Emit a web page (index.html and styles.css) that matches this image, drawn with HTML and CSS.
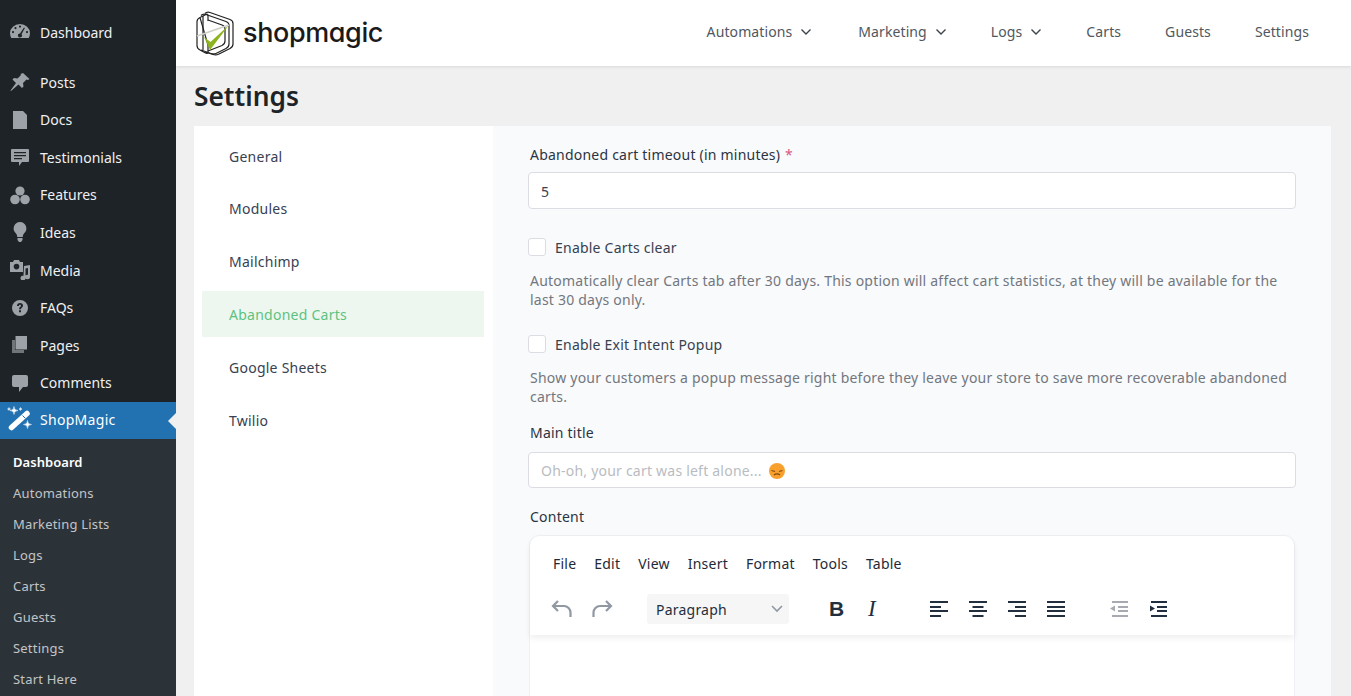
FILE: index.html
```html
<!DOCTYPE html>
<html lang="en">
<head>
<meta charset="utf-8">
<title>Settings</title>
<link rel="stylesheet" href="styles.css">
</head>
<body>
<div class="app">
  <aside class="side">
    <nav class="menu">
      <a class="item first"><svg class="ico" viewBox="0 0 20 20"><path fill-rule="evenodd" d="M10 2a10 9 0 0 0-10 9c0 1.800.4 3.300 1.200 5h17.600c.8-1.700 1.200-3.200 1.200-5a10 9 0 0 0-10-9zM10 3.500a1.100 1.100 0 1 1 0 2.200 1.100 1.100 0 0 1 0-2.200zM5.500 5a1.100 1.100 0 1 1 0 2.200 1.100 1.100 0 0 1 0-2.200zM3 9a1.100 1.100 0 1 1 0 2.200A1.100 1.100 0 0 1 3 9zm14 0a1.100 1.100 0 1 1 0 2.200 1.100 1.100 0 0 1 0-2.200zm-3-3.500.9.6-3.400 6.200a2 2 0 1 1-1.500-.8z"/></svg><span>Dashboard</span></a>
      <a class="item sep"><svg class="ico" viewBox="0 0 20 20"><path d="M13 1l6.500 6-1.500 1-1.500-.5-3.500 3.500.5 3.500-1.500 1.500-3.500-3.500L1 19l-.5-.5 5.500-7.500L2.500 7.500 4 6l3.500.5L11 3l-.5-1z"/></svg><span>Posts</span></a>
      <a class="item"><svg class="ico" viewBox="0 0 20 20"><path d="M3 1h10l4 4v14H3z"/></svg><span>Docs</span></a>
      <a class="item"><svg class="ico" viewBox="0 0 20 20"><path fill-rule="evenodd" d="M2 2h16a1 1 0 0 1 1 1v11a1 1 0 0 1-1 1h-6l-3 4v-4H2a1 1 0 0 1-1-1V3a1 1 0 0 1 1-1zm2 3v1.300h12V5zm0 3v1.300h12V8zm0 3v1.300h8V11z"/></svg><span>Testimonials</span></a>
      <a class="item"><svg class="ico" viewBox="0 0 20 20"><circle cx="10" cy="6" r="4.600"/><circle cx="5" cy="14.500" r="4.800"/><circle cx="15" cy="14.500" r="4.800"/></svg><span>Features</span></a>
      <a class="item"><svg class="ico" viewBox="0 0 20 20"><path d="M10 0a6.500 6.500 0 0 1 4 11.500c-.8.8-1.200 2-1.200 3.500H7.200c0-1.500-.4-2.700-1.200-3.500A6.500 6.500 0 0 1 10 0zM7.500 16h5v2l-1.500 2H9l-1.500-2z"/></svg><span>Ideas</span></a>
      <a class="item"><svg class="ico" viewBox="0 0 20 20"><path fill-rule="evenodd" d="M0 2h3l1-2h5l1 2h3v10H0zm6.500 1.800a2.800 2.800 0 1 0 0 5.600 2.800 2.800 0 0 0 0-5.600z"/><path d="M14 6l6-1v12a2.500 2.300 0 1 1-2-2.200V8l-2.500.5V18a2.500 2.300 0 1 1-2-2.200z"/></svg><span>Media</span></a>
      <a class="item"><svg class="ico" viewBox="0 0 20 20"><path fill-rule="evenodd" d="M10 2a8 8 0 1 1 0 16 8 8 0 0 1 0-16zM7 8h2c0-.8.400-1.200 1-1.200s1 .4 1 1c0 1-2 1.300-2 3.400h2c0-1.400 2-1.700 2-3.600C13 6 11.800 5 10 5 8.200 5 7 6.200 7 8zm2 4.300v2h2v-2z"/></svg><span>FAQs</span></a>
      <a class="item"><svg class="ico" viewBox="0 0 20 20"><path opacity=".65" d="M2 5h3v10h9v3H2z"/><path d="M5.500 1H17v13.500H5.500z"/></svg><span>Pages</span></a>
      <a class="item"><svg class="ico" viewBox="0 0 20 20"><path d="M4 2h12a2 2 0 0 1 2 2v8a2 2 0 0 1-2 2h-3l-4 5v-5H4a2 2 0 0 1-2-2V4a2 2 0 0 1 2-2z"/></svg><span>Comments</span></a>
      <a class="item current"><svg class="ico" viewBox="0 0 24 24"><path class="wand" d="M3.500 19.500L19 5.500"/><path class="wandcut" d="M14.500 7.500l2.800 2.800"/><path class="spark" d="M6 -1.500Q6 2.500 10 2.500Q6 2.500 6 6.500Q6 2.500 2 2.500Q6 2.500 6 -1.500zM19.500 12.500Q19.500 16.500 23.500 16.500Q19.500 16.500 19.500 20.500Q19.500 16.500 15.500 16.500Q19.500 16.500 19.500 12.500zM1 -.5Q1 1 2.500 1Q1 1 1 2.500Q1 1 -.5 1Q1 1 1 -.5zM12.500 -.5Q12.500 1 14 1Q12.500 1 12.500 2.500Q12.500 1 11 1Q12.500 1 12.500 -.5z"/></svg><span>ShopMagic</span><i class="notch"></i></a>
    </nav>
    <nav class="sub">
      <a class="subitem bold">Dashboard</a>
      <a class="subitem">Automations</a>
      <a class="subitem">Marketing Lists</a>
      <a class="subitem">Logs</a>
      <a class="subitem">Carts</a>
      <a class="subitem">Guests</a>
      <a class="subitem">Settings</a>
      <a class="subitem">Start Here</a>
    </nav>
  </aside>
  <div class="main">
    <header class="top">
      <div class="brand">
        <svg class="logo" viewBox="0 0 46 52" fill="none">
          <path class="lg" d="M13 6.500Q15 4.500 18 5.500L38 12.500Q41 13.500 41 16.500V37Q41 40 38 41.500L27 47Q24 48.500 21 47.500L13 45"/>
          <path class="lg" d="M9 8.500Q11 6.500 14 7.500L34 14.500Q37 15.500 37 18.500V37Q37 40 34 41.500L25 46Q22 47.500 19 46.500L9 43"/>
          <path class="lg" d="M8 10.500L14 7.500Q16 6.500 16 9V14M16 38V44.500Q16 47 13.500 46L8 43Q5 41.500 5 38.500V14.500Q5 12 8 10.500z"/>
          <path class="lg" d="M11 9V43"/>
          <path class="lg" d="M16 13L30 18Q33 19 33 22V34Q33 37 30 38.500L16 44"/>
          <path class="ck" d="M12 30L18.500 35 37 18 18 43z"/>
          <path class="gr" d="M5 29L37 18" />
        </svg>
        <span class="word">shopmagic</span>
      </div>
      <nav class="links">
        <a class="link first-link">Automations<svg class="chev" viewBox="0 0 12 8"><path d="M1.500 1.500L6 6l4.500-4.500"/></svg></a>
        <a class="link">Marketing<svg class="chev" viewBox="0 0 12 8"><path d="M1.500 1.500L6 6l4.500-4.500"/></svg></a>
        <a class="link">Logs<svg class="chev" viewBox="0 0 12 8"><path d="M1.500 1.500L6 6l4.500-4.500"/></svg></a>
        <a class="link">Carts</a>
        <a class="link">Guests</a>
        <a class="link">Settings</a>
      </nav>
    </header>
    <div class="content">
      <h1 class="title">Settings</h1>
      <div class="card">
        <ul class="tabs">
          <li class="tab">General</li>
          <li class="tab">Modules</li>
          <li class="tab">Mailchimp</li>
          <li class="tab active">Abandoned Carts</li>
          <li class="tab">Google Sheets</li>
          <li class="tab">Twilio</li>
        </ul>
        <form class="form">
          <div class="label l1">Abandoned cart timeout (in minutes) <b class="req">*</b></div>
          <div class="input value">5</div>
          <div class="check c1"><i class="box"></i><span>Enable Carts clear</span></div>
          <p class="help h1x">Automatically clear Carts tab after 30 days. This option will affect cart statistics, at they will be available for the last 30 days only.</p>
          <div class="check c2"><i class="box"></i><span>Enable Exit Intent Popup</span></div>
          <p class="help h2x">Show your customers a popup message right before they leave your store to save more recoverable abandoned carts.</p>
          <div class="label l2">Main title</div>
          <div class="input ph">Oh-oh, your cart was left alone...
            <svg class="emoji" viewBox="0 0 16 16"><circle cx="8" cy="8" r="8" fill="#f9a02c"/><path d="M2.500 7.500L6 8.500M13.500 7.500L10 8.500M5 12c1.500-1.500 4.500-1.500 6 0" stroke="#7c4a12" stroke-width="1.100" fill="none"/></svg>
          </div>
          <div class="label l3">Content</div>
          <div class="editor">
            <div class="ehead">
              <div class="emenu"><span>File</span><span>Edit</span><span>View</span><span>Insert</span><span>Format</span><span>Tools</span><span>Table</span></div>
              <div class="etools">
                <svg class="tool" viewBox="0 0 24 24"><path class="st dim" d="M8 4L3 9l5 5M3.500 9H14a6.500 6.500 0 0 1 6.500 6.500V20"/></svg>
                <svg class="tool t2" viewBox="0 0 24 24"><path class="st dim" d="M16 4l5 5-5 5M20.500 9H10a6.500 6.500 0 0 0-6.500 6.500V20"/></svg>
                <div class="select"><span>Paragraph</span><svg class="selchev" viewBox="0 0 12 8"><path d="M1 1l5 5 5-5"/></svg></div>
                <b class="tool-b">B</b>
                <i class="tool-i">I</i>
                <svg class="tool t3" viewBox="0 0 24 24"><path class="fl" d="M3 4h18v2H3zM3 9h11v2H3zM3 13h18v2H3zM3 18h11v2H3z"/></svg>
                <svg class="tool t4" viewBox="0 0 24 24"><path class="fl" d="M3 4h18v2H3zM6.500 9h11v2h-11zM3 13h18v2H3zM6.500 18h11v2h-11z"/></svg>
                <svg class="tool t4" viewBox="0 0 24 24"><path class="fl" d="M3 4h18v2H3zM10 9h11v2H10zM3 13h18v2H3zM10 18h11v2H10z"/></svg>
                <svg class="tool t4" viewBox="0 0 24 24"><path class="fl" d="M3 4h18v2H3zM3 9h18v2H3zM3 13h18v2H3zM3 18h18v2H3z"/></svg>
                <svg class="tool t5" viewBox="0 0 24 24"><path class="fl dimf" d="M5 4h16v2H5zM11 9h10v2H11zM11 13h10v2H11zM5 18h16v2H5zM8 8.500v6L3 11.500z"/></svg>
                <svg class="tool t4" viewBox="0 0 24 24"><path class="fl" d="M5 4h16v2H5zM11 9h10v2H11zM11 13h10v2H11zM5 18h16v2H5zM4 8.500v6l5-3z"/></svg>
              </div>
            </div>
          </div>
        </form>
      </div>
    </div>
  </div>
</div>
</body>
</html>
```
FILE: styles.css
```css
* { box-sizing: border-box; }
html, body { margin: 0; height: 696px; overflow: hidden; }
body { font-family: "Noto Sans", "Open Sans", sans-serif; font-size: 14px; color: #2c3338; background: #f0f0f0; }
.app { display: flex; height: 696px; }

.side { width: 176px; flex: none; background: #1d2327; display: flex; flex-direction: column; }
.menu { padding-top: 13.300px; }
.item { display: flex; align-items: center; height: 37.600px; padding-left: 10px; color: #f0f0f1; font-size: 14px; position: relative; }
.item.sep { margin-top: 12.400px; }
.item .ico { width: 20px; height: 20px; fill: #9ca2a7; margin-right: 10px; flex: none; }
.item.current { background: #2271b1; color: #fff; letter-spacing: .3px; padding-bottom: 1px; }
.item.current .ico { width: 24px; height: 24px; margin-left: -2px; margin-right: 8px; overflow: visible; }
.wand { fill: none; stroke: #fff; stroke-width: 5.500; stroke-linecap: round; }
.wandcut { fill: none; stroke: #2271b1; stroke-width: 1; }
.spark { fill: #fff; stroke: #fff; stroke-width: .5; }
.notch { position: absolute; right: 0; top: 11px; border: 8px solid transparent; border-right-color: #f0f0f1; border-left-width: 0; }
.sub { flex: 1; background: #2c3338; padding-top: 7.500px; }
.subitem { display: block; height: 31px; line-height: 31px; padding-left: 13px; font-size: 13px; color: #c3c4c7; letter-spacing: .2px; }
.subitem.bold { color: #fff; font-weight: 600; letter-spacing: .05px; }

.main { flex: 1; min-width: 0; display: flex; flex-direction: column; }
.top { height: 66px; flex: none; background: #fff; box-shadow: 0 1px 3px rgba(0,0,0,.1); display: flex; align-items: center; justify-content: space-between; padding: 0 42px 0 16px; position: relative; }
.brand { display: flex; align-items: center; padding-bottom: 2px; }
.logo { width: 46px; height: 52px; margin-top: 2px; }
.lg { fill: none; stroke: #222; stroke-width: 1.200; }
.gr { fill: none; stroke: #cfcfc9; stroke-width: 1.600; }
.ck { fill: #8cb41f; }
.word { font-family: Inter, "Noto Sans", sans-serif; font-feature-settings: "cv11"; font-size: 27px; font-weight: 500; color: #1a1a1a; margin-left: 5px; letter-spacing: -.4px; }
.links { display: flex; gap: 44px; padding-bottom: 3px; }
.link { display: flex; align-items: center; font-size: 14px; color: #50575e; letter-spacing: .1px; }
.first-link { margin-right: 2px; }
.chev { width: 12px; height: 8px; margin-left: 8px; fill: none; stroke: #3c434a; stroke-width: 1.400; }

.content { flex: 1; padding: 0 20px 0 18px; min-height: 0; }
.title { margin: 0; font-size: 26.300px; line-height: 60px; font-weight: 600; color: #1d2327; height: 60px; }
.card { display: flex; height: 600px; background: #fff; box-shadow: 0 1px 1px rgba(0,0,0,.03); }
.tabs { list-style: none; margin: 0; padding: 6.600px 9px 0 8px; width: 299px; flex: none; }
.tab { height: 45.800px; line-height: 47px; padding-left: 27px; margin-bottom: 7px; color: #374151; font-size: 14px; letter-spacing: .25px; }
.tab.active { background: #edf7f0; color: #5ec27f; }

.form { flex: 1; background: #f9fafb; padding: 0 35px; display: flex; flex-direction: column; align-items: stretch; letter-spacing: .22px; }
.label { font-size: 14px; color: #2b3442; padding-left: 2px; line-height: 20px; }
.l1 { margin-top: 19px; }
.req { color: #d9577f; font-weight: 400; margin-left: 1px; }
.input { height: 38px; border: 1px solid #dcdde3; border-radius: 4px; background: #fff; padding: 3px 12px 0; display: flex; align-items: center; font-size: 14px; margin-top: 7px; }
.value { color: #374151; }
.ph { color: #b9bcc1; margin-top: 9px; padding-top: 2px; }
.emoji { width: 16px; height: 16px; margin-left: 7px; }
.check { display: flex; align-items: center; gap: 9px; color: #374151; font-size: 14px; height: 20px; }
.c1 span { padding-top: 1px; }
.box { width: 18px; height: 18px; border: 1px solid #dcdde3; border-radius: 3px; background: #fff; }
.c1 { margin-top: 28px; }
.c2 { margin-top: 26px; }
.help { margin: 0; padding-left: 2px; color: #72777f; font-size: 14px; line-height: 19px; }
.h1x { margin-top: 14px; }
.h2x { margin-top: 14px; }
.l2 { margin-top: 17px; }
.l3 { margin-top: 19px; }
.editor { margin: 8px 0 0 1px; width: 766px; height: 200px; background: #fff; border: 1px solid #eef0f3; border-radius: 10px 10px 0 0; }
.ehead { height: 99px; box-shadow: 0 3px 6px rgba(0,0,0,.07); border-radius: 10px 10px 0 0; }
.emenu { display: flex; gap: 18px; padding: 18px 0 0 23px; font-size: 14px; color: #1f2937; line-height: 20px; }
.etools { display: flex; align-items: center; padding: 20px 0 0 20px; height: 50px; }
.tool { width: 24px; height: 24px; flex: none; }
.st { fill: none; stroke-width: 2.200; stroke: #222f3e; }
.st.dim { stroke: #8f98a3; }
.fl { fill: #222f3e; }
.fl.dimf { fill: #a7abb1; }
.t2 { margin-left: 16px; }
.select { width: 142px; height: 30px; background: #f6f6f6; border-radius: 3px; margin-left: 33px; display: flex; align-items: center; justify-content: space-between; padding: 0 6px 0 9px; font-size: 14px; color: #222f3e; flex: none; }
.selchev { width: 12px; height: 8px; fill: none; stroke: #8f98a3; stroke-width: 1.600; }
.tool-b { margin-left: 40px; font-family: "Liberation Sans", sans-serif; font-size: 21px; font-weight: 700; color: #222f3e; width: 16px; }
.tool-i { margin-left: 23px; font-family: "Liberation Serif", serif; font-size: 23px; font-style: italic; color: #222f3e; width: 12px; }
.t3 { margin-left: 47px; }
.t4 { margin-left: 15px; }
.t5 { margin-left: 39px; }
```
